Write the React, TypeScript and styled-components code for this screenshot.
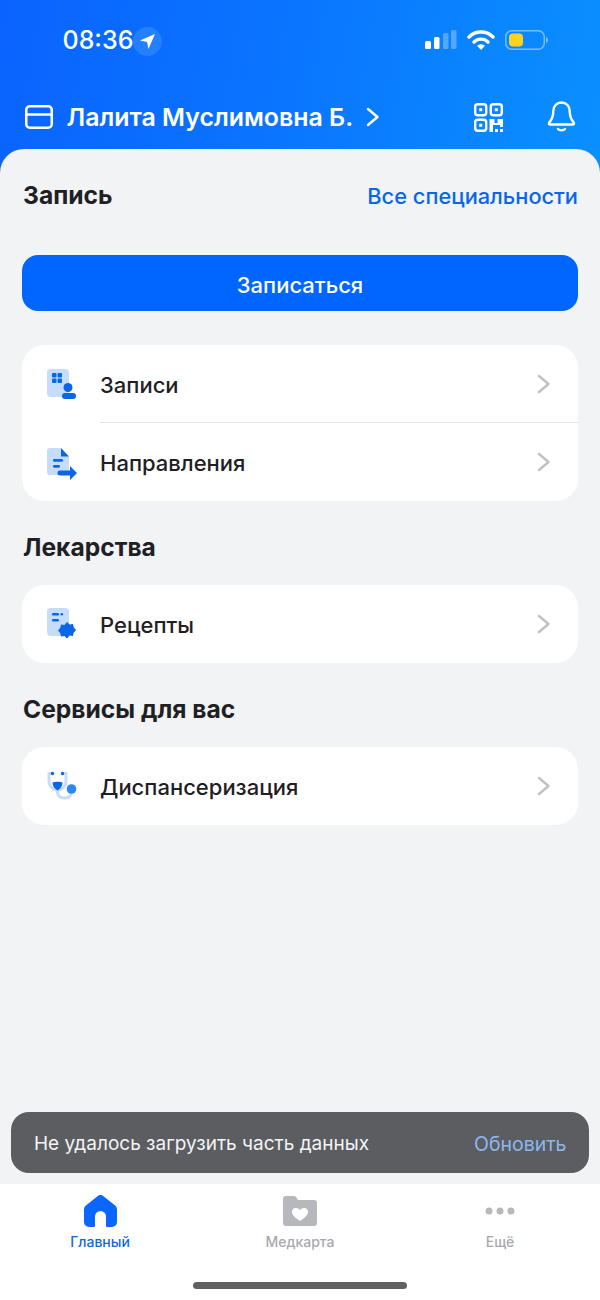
import React from 'react';
import styled, { createGlobalStyle } from 'styled-components';

const Global = createGlobalStyle`
  html, body { margin: 0; padding: 0; }
  body { font-family: Inter, "Liberation Sans", sans-serif; -webkit-font-smoothing: antialiased; }
`;

const Shell = styled.div`
  position: relative;
  width: 600px;
  height: 1300px;
  overflow: hidden;
  display: flex;
  flex-direction: column;
  background: linear-gradient(100deg, #0a63ff 0%, #0a74ff 45%, #0a90ff 100%) no-repeat;
  background-size: 100% 175px;
`;

const Header = styled.header`
  height: 149px;
  display: flex;
  flex-direction: column;
  color: #fff;
  flex-shrink: 0;
`;

const StatusBar = styled.div`
  height: 80px;
  display: flex;
  align-items: center;
  padding: 0 52px 0 62.500px;
`;

const Clock = styled.span`
  font-size: 25px;
  font-weight: 500;
`;

const LocationBadge = styled.span`
  width: 29px;
  height: 29px;
  margin: 2px 0 0 0;
  border-radius: 50%;
  background: #2381ff;
  display: flex;
  align-items: center;
  justify-content: center;
`;

const StatusIcons = styled.div`
  margin-left: auto;
  display: flex;
  align-items: center;
  gap: 10px;
`;

const UserRow = styled.div`
  flex: 1;
  display: flex;
  align-items: center;
  padding: 5px 24px 0 25px;
`;

const UserName = styled.span`
  margin-left: 13.5px;
  font-size: 24.9px;
  font-weight: 600;
  white-space: nowrap;
`;

const NameChevron = styled.span`
  margin-left: 13px;
  display: flex;
`;

const HeaderActions = styled.div`
  margin-left: auto;
  display: flex;
  align-items: center;
  gap: 44px;
`;

const Sheet = styled.main`
  flex: 1;
  background: #f2f3f5;
  border-radius: 24px 24px 0 0;
  padding: 31px 22px 0;
`;

const TitleRow = styled.div`
  height: 30px;
  display: flex;
  align-items: center;
  justify-content: space-between;
`;

const SectionTitle = styled.h2`
  margin: 0 0 0 1px;
  font-size: 24.6px;
  font-weight: 700;
  color: #1f2024;
`;

const SectionHead = styled.div`
  height: 84px;
  display: flex;
  align-items: center;
  padding-top: 8px;
  box-sizing: border-box;
`;

const LinkText = styled.a`
  padding-top: 2px;
  font-size: 21.8px;
  font-weight: 500;
  color: #0a66e8;
`;

const PrimaryButton = styled.button`
  display: block;
  width: 100%;
  height: 56px;
  margin: 45px 0 34px;
  padding: 3px 0 0;
  border: 0;
  border-radius: 16px;
  background: #0066ff;
  color: #fff;
  font-family: inherit;
  font-size: 22px;
  font-weight: 500;
`;

const Card = styled.section`
  background: #fff;
  border-radius: 22px;
  overflow: hidden;
`;

const Row = styled.div`
  height: 78px;
  display: flex;
  align-items: center;
  padding-left: 25px;
`;

const RowIcon = styled.span`
  width: 32px;
  height: 32px;
  display: flex;
  flex-shrink: 0;
`;

const RowBody = styled.div<{ $divider?: boolean }>`
  flex: 1;
  height: 100%;
  margin-left: 21px;
  padding-right: 27px;
  display: flex;
  align-items: center;
  justify-content: space-between;
  box-sizing: border-box;
  border-bottom: ${(p) => (p.$divider ? '1.5px solid #e2e3e6' : '0')};
`;

const RowLabel = styled.span`
  padding-top: 2px;
  font-size: 22px;
  font-weight: 500;
  color: #1f2024;
`;

const Snackbar = styled.div`
  position: absolute;
  left: 11px;
  right: 11px;
  top: 1112px;
  height: 61px;
  border-radius: 18px;
  background: #5b5d61;
  display: flex;
  align-items: center;
  justify-content: space-between;
  padding: 2px 22.500px 0 23px;
  box-sizing: border-box;
  font-size: 19px;
  color: #f4f4f5;
`;

const SnackAction = styled.span`
  font-size: 19.5px;
  color: #8fb6ec;
`;

const TabBar = styled.nav`
  height: 116px;
  flex-shrink: 0;
  background: #fff;
  display: grid;
  grid-template-columns: repeat(3, 200px);
  position: relative;
`;

const Tab = styled.div<{ $active?: boolean }>`
  height: 72px;
  padding-top: 9px;
  display: flex;
  flex-direction: column;
  align-items: center;
  font-size: 14px;
  font-weight: 500;
  color: ${(p) => (p.$active ? '#0f67dc' : '#a9a9ad')};
`;

const TabIcon = styled.span`
  height: 35px;
  margin-bottom: 5px;
  display: flex;
  align-items: center;
`;

const HomeIndicator = styled.div`
  position: absolute;
  left: 193px;
  top: 98px;
  width: 214px;
  height: 7px;
  border-radius: 4px;
  background: #616163;
`;

const Chevron = () => (
  <svg width="14" height="20" viewBox="0 0 14 20" fill="none">
    <path d="M2 2l9.500 8L2 18" stroke="#c0c1c5" strokeWidth="2.400" strokeLinecap="round" strokeLinejoin="round" />
  </svg>
);

const AppointmentsIcon = () => (
  <svg width="32" height="32" viewBox="0 0 32 32">
    <rect x="0" y="1" width="22" height="28" rx="4" fill="#c5dcfb" />
    <rect x="5" y="5" width="4.500" height="4.500" rx="1" fill="#0a66e8" />
    <rect x="10.500" y="5" width="4.500" height="4.500" rx="1" fill="#0a66e8" />
    <rect x="5" y="10.500" width="4.500" height="4.500" rx="1" fill="#0a66e8" />
    <rect x="10.500" y="10.500" width="4.500" height="4.500" rx="1" fill="#0a66e8" />
    <circle cx="21" cy="19.500" r="4.500" fill="#0a66e8" />
    <rect x="15" y="25" width="14" height="6" rx="3" fill="#0a66e8" />
  </svg>
);

const ReferralIcon = () => (
  <svg width="32" height="34" viewBox="0 0 32 34">
    <path d="M3 2h11l8 9v15a3 3 0 0 1-3 3H3a3 3 0 0 1-3-3V5a3 3 0 0 1 3-3z" fill="#c5dcfb" />
    <path d="M14 2l8 8.500h-8z" fill="#0a66e8" />
    <rect x="6" y="13" width="10" height="2.800" rx="1.400" fill="#0a66e8" />
    <rect x="6" y="19" width="7" height="2.800" rx="1.400" fill="#0a66e8" />
    <path d="M13 24.500h10v-4.500l7 7-7 7v-4.500H13a2.500 2.500 0 0 1 0-5z" fill="#0a66e8" />
  </svg>
);

const RecipeIcon = () => (
  <svg width="32" height="32" viewBox="0 0 32 32">
    <rect x="0" y="0" width="22" height="28" rx="4" fill="#c5dcfb" />
    <rect x="5" y="5" width="7" height="2.600" rx="1.300" fill="#0a66e8" />
    <rect x="13.500" y="5" width="2.600" height="2.600" rx="1.300" fill="#0a66e8" />
    <rect x="5" y="11" width="7" height="2.600" rx="1.300" fill="#0a66e8" />
    <path
      d="M20 14l2.600 2.600 3.400-.7.700 3.400 2.300 2.700-2.300 2.700-.7 3.400-3.400-.7L20 30.500l-2.600-2.600-3.400.7-.7-3.400-2.300-2.700 2.300-2.700.7-3.400 3.400.7z"
      fill="#0a66e8"
    />
  </svg>
);

const StethoscopeIcon = () => (
  <svg width="32" height="32" viewBox="0 0 32 32" fill="none">
    <path d="M4 3.500H2v8a8.500 8.500 0 0 0 17 0v-8h-2" stroke="#c5dcfb" strokeWidth="3" strokeLinecap="round" />
    <path d="M10.500 20v2a6 6 0 0 0 6 6h2a6 6 0 0 0 5.500-4" stroke="#c5dcfb" strokeWidth="3" strokeLinecap="round" />
    <circle cx="5.500" cy="3.500" r="1.700" fill="#0a66e8" />
    <circle cx="15.500" cy="3.500" r="1.700" fill="#0a66e8" />
    <path d="M5.500 12.500c2-1 8-1 10 0 0 3.500-2 6.500-5 8-3-1.500-5-4.500-5-8z" fill="#0a66e8" />
    <circle cx="24.500" cy="19" r="4.800" fill="#2f86ee" />
  </svg>
);

const App: React.FC = () => {
  return (
    <Shell>
      <Global />
      <Header>
        <StatusBar>
          <Clock>08:36</Clock>
          <LocationBadge>
            <svg width="17" height="17" viewBox="0 0 17 17">
              <path d="M16 1L1 7.500l7 1.500 1.500 7z" fill="#fff" />
            </svg>
          </LocationBadge>
          <StatusIcons>
            <svg width="32" height="20" viewBox="0 0 32 20">
              <rect x="0" y="11" width="6" height="8" rx="1.500" fill="#fff" />
              <rect x="9" y="7" width="5.500" height="12" rx="1.500" fill="#fff" />
              <rect x="18" y="3" width="5.500" height="16" rx="1.500" fill="#fff" opacity="0.3" />
              <rect x="26" y="0" width="5.500" height="19" rx="1.500" fill="#fff" opacity="0.3" />
            </svg>
            <svg width="28" height="20" viewBox="0 0 28 20" fill="none">
              <path d="M2 7a17 17 0 0 1 24 0" stroke="#fff" strokeWidth="3.400" strokeLinecap="round" />
              <path d="M7 12a10 10 0 0 1 14 0" stroke="#fff" strokeWidth="3.400" strokeLinecap="round" />
              <path d="M14 20l-4-4.200a6 6 0 0 1 8 0z" fill="#fff" />
            </svg>
            <svg width="43" height="20" viewBox="0 0 43 20">
              <rect x="0.750" y="0.750" width="38.500" height="18.500" rx="6" fill="none" stroke="#fff" strokeOpacity="0.45" strokeWidth="1.500" />
              <rect x="4" y="3.500" width="14" height="13" rx="4" fill="#ffd21f" />
              <path d="M41 7c1.300.400 2 1.500 2 3s-.700 2.600-2 3z" fill="#fff" fillOpacity="0.45" />
            </svg>
          </StatusIcons>
        </StatusBar>
        <UserRow>
          <svg width="28" height="24" viewBox="0 0 28 24" fill="none">
            <rect x="1.250" y="1.250" width="25.500" height="21.500" rx="3.500" stroke="#fff" strokeWidth="2.500" />
            <path d="M1.500 9.500h25" stroke="#fff" strokeWidth="2.500" />
          </svg>
          <UserName>Лалита Муслимовна Б.</UserName>
          <NameChevron>
            <svg width="14" height="20" viewBox="0 0 14 20" fill="none">
              <path d="M2 2l9.500 8L2 18" stroke="#fff" strokeWidth="2.400" strokeLinecap="round" strokeLinejoin="round" />
            </svg>
          </NameChevron>
          <HeaderActions>
            <svg width="29" height="29" viewBox="0 0 29 29" fill="none">
              <rect x="1.200" y="1.200" width="11" height="11" rx="2.500" stroke="#fff" strokeWidth="2.400" />
              <rect x="16.800" y="1.200" width="11" height="11" rx="2.500" stroke="#fff" strokeWidth="2.400" />
              <rect x="1.200" y="16.800" width="11" height="11" rx="2.500" stroke="#fff" strokeWidth="2.400" />
              <rect x="5.200" y="5.200" width="3" height="3" fill="#fff" />
              <rect x="20.800" y="5.200" width="3" height="3" fill="#fff" />
              <rect x="5.200" y="20.800" width="3" height="3" fill="#fff" />
              <path d="M15.500 29V16h5v4h3v-4h5.500v8h-3v-2h-7v7z" fill="#fff" />
              <rect x="21" y="26" width="3" height="3" fill="#fff" />
              <rect x="26" y="26" width="3" height="3" fill="#fff" />
            </svg>
            <svg width="29" height="32" viewBox="0 0 29 32" fill="none">
              <path
                d="M14.500 1.500c-5 0-8.200 3.800-8.200 8.500 0 6-1.800 9-4 11.500-.8 1-.2 2 1 2h22.400c1.200 0 1.800-1 1-2-2.200-2.500-4-5.500-4-11.500 0-4.700-3.200-8.500-8.200-8.500z"
                stroke="#fff"
                strokeWidth="2.400"
                strokeLinejoin="round"
              />
              <path d="M11 28c1.500 1.800 5.500 1.800 7 0" stroke="#fff" strokeWidth="2.400" strokeLinecap="round" />
            </svg>
          </HeaderActions>
        </UserRow>
      </Header>

      <Sheet>
        <TitleRow>
          <SectionTitle>Запись</SectionTitle>
          <LinkText>Все специальности</LinkText>
        </TitleRow>
        <PrimaryButton>Записаться</PrimaryButton>

        <Card>
          <Row>
            <RowIcon><AppointmentsIcon /></RowIcon>
            <RowBody $divider>
              <RowLabel>Записи</RowLabel>
              <Chevron />
            </RowBody>
          </Row>
          <Row>
            <RowIcon><ReferralIcon /></RowIcon>
            <RowBody>
              <RowLabel>Направления</RowLabel>
              <Chevron />
            </RowBody>
          </Row>
        </Card>

        <SectionHead>
          <SectionTitle>Лекарства</SectionTitle>
        </SectionHead>
        <Card>
          <Row>
            <RowIcon><RecipeIcon /></RowIcon>
            <RowBody>
              <RowLabel>Рецепты</RowLabel>
              <Chevron />
            </RowBody>
          </Row>
        </Card>

        <SectionHead>
          <SectionTitle>Сервисы для вас</SectionTitle>
        </SectionHead>
        <Card>
          <Row>
            <RowIcon><StethoscopeIcon /></RowIcon>
            <RowBody>
              <RowLabel>Диспансеризация</RowLabel>
              <Chevron />
            </RowBody>
          </Row>
        </Card>
      </Sheet>

      <Snackbar>
        <span>Не удалось загрузить часть данных</span>
        <SnackAction>Обновить</SnackAction>
      </Snackbar>

      <TabBar>
        <Tab $active>
          <TabIcon>
            <svg width="33" height="32" viewBox="0 0 33 32">
              <path
                d="M13.500 1.200a4.500 4.500 0 0 1 6 0l11 8.800a5 5 0 0 1 2.500 4.300V27a5 5 0 0 1-5 5h-5a1 1 0 0 1-1-1V21.500a5.500 5.500 0 0 0-11 0V31a1 1 0 0 1-1 1H5a5 5 0 0 1-5-5V14.300a5 5 0 0 1 2.500-4.300z"
                fill="#0a66ff"
              />
            </svg>
          </TabIcon>
          Главный
        </Tab>
        <Tab>
          <TabIcon>
            <svg width="34" height="30" viewBox="0 0 34 30">
              <path d="M3 0h8a3 3 0 0 1 2.500 1.500L15 4h16a3 3 0 0 1 3 3v20a3 3 0 0 1-3 3H3a3 3 0 0 1-3-3V3a3 3 0 0 1 3-3z" fill="#b7b8bc" />
              <path d="M17 25c-5-3.500-8-6-8-9.300 0-2.300 1.800-3.700 3.800-3.700 1.800 0 3.200.9 4.200 2.300 1-1.400 2.400-2.300 4.200-2.300 2 0 3.800 1.400 3.800 3.700 0 3.300-3 5.800-8 9.300z" fill="#fff" />
            </svg>
          </TabIcon>
          Медкарта
        </Tab>
        <Tab>
          <TabIcon>
            <svg width="30" height="8" viewBox="0 0 30 8">
              <circle cx="4" cy="4" r="3.500" fill="#b7b8bc" />
              <circle cx="15" cy="4" r="3.500" fill="#b7b8bc" />
              <circle cx="26" cy="4" r="3.500" fill="#b7b8bc" />
            </svg>
          </TabIcon>
          Ещё
        </Tab>
        <HomeIndicator />
      </TabBar>
    </Shell>
  );
};

export default App;
